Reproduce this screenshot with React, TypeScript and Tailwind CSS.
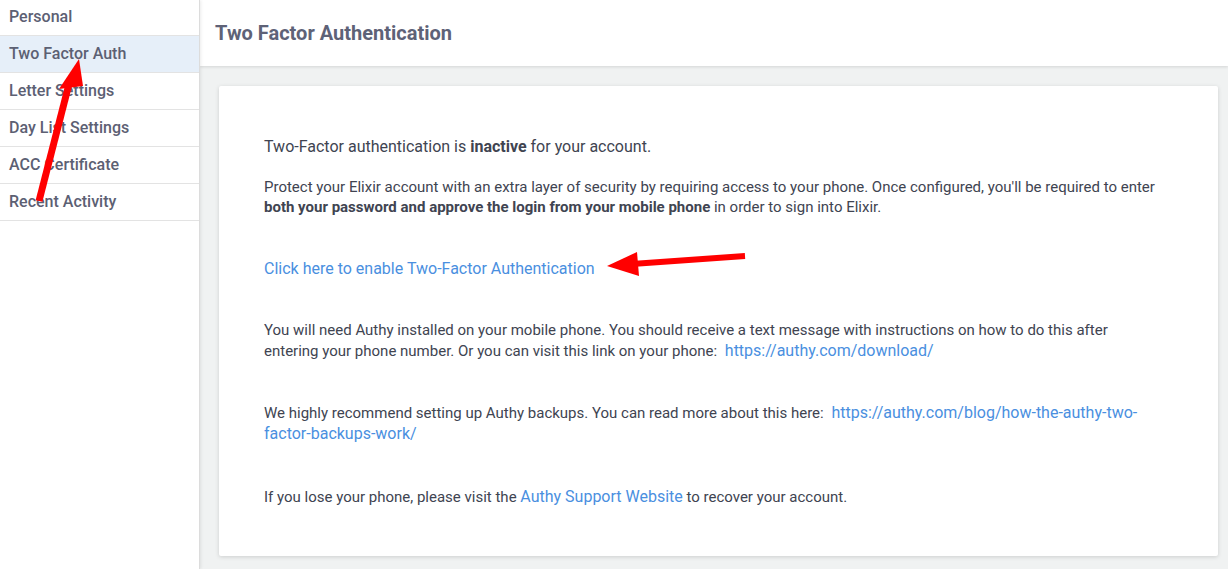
const NAV = ['Personal', 'Two Factor Auth', 'Letter Settings', 'Day List Settings', 'ACC Certificate', 'Recent Activity'];

export default function App() {
  return (
    <div className="relative flex h-[569px] w-[1228px] overflow-hidden bg-white font-['Roboto',sans-serif]">
      {/* Sidebar */}
      <aside className="z-10 w-[200px] shrink-0 border-r border-[#dcdcdc] bg-white shadow-[1px_0_3px_rgba(0,0,0,0.08)]">
        {NAV.map((item, i) => (
          <div
            key={item}
            className={`flex items-center border-b border-[#e3e3e3] pl-[9px] text-[16px] font-medium text-[#5c6073] ${
              i === 0 ? 'h-[36px] pb-[1px]' : 'h-[37px]'
            } ${i === 1 ? 'bg-[#e6eff9]' : ''}`}
          >
            {item}
          </div>
        ))}
      </aside>

      {/* Main */}
      <main className="flex flex-1 flex-col bg-[#f0f2f2]">
        <header className="flex h-[66px] items-center bg-white pl-[15px] shadow-[0_1px_3px_rgba(0,0,0,0.12)]">
          <h1 className="text-[20px] font-bold text-[#5e6277]">Two Factor Authentication</h1>
        </header>

        <div className="mt-[20px] mr-[10px] ml-[19px] h-[470px] rounded-[2px] bg-white pr-[55px] pl-[45px] pt-[49px] text-[#404451] shadow-[0_1px_4px_rgba(0,0,0,0.15)]">
          <p className="text-[16px] leading-[24px]">
            Two-Factor authentication is <b>inactive</b> for your account.
          </p>
          <p className="mt-[18px] text-[15px] leading-[20px]">
            Protect your Elixir account with an extra layer of security by requiring access to your phone. Once configured, you'll be required to enter{' '}
            <b>both your password and approve the login from your mobile phone</b> in order to sign into Elixir.
          </p>
          <p className="mt-[41px] text-[16px] leading-[22px] text-[#4a8fdf]">Click here to enable Two-Factor Authentication</p>
          <p className="mt-[40px] text-[15px] leading-[21px]">
            You will need Authy installed on your mobile phone. You should receive a text message with instructions on how to do this after entering your phone number. Or you can visit this link on your phone:{' '}
            <span className="ml-[4px] text-[16px] leading-none text-[#4a8fdf]">https://authy.com/download/</span>
          </p>
          <p className="mt-[41px] text-[15px] leading-[21px]">
            We highly recommend setting up Authy backups. You can read more about this here:{' '}
            <span className="ml-[4px] text-[16px] leading-none text-[#4a8fdf]">https://authy.com/blog/how-the-authy-two-factor-backups-work/</span>
          </p>
          <p className="mt-[42px] text-[15px] leading-[21px]">
            If you lose your phone, please visit the <span className="text-[16px] leading-none text-[#4a8fdf]">Authy Support Website</span> to recover your account.
          </p>
        </div>
      </main>

      {/* Annotation arrows */}
      <svg className="pointer-events-none absolute inset-0 z-20" width="1228" height="569">
        <line x1="39" y1="201" x2="69" y2="84" stroke="#ff0000" strokeWidth="7" />
        <polygon points="79,59 59,89 83,86" fill="#ff0000" />
        <line x1="745" y1="256" x2="632" y2="264" stroke="#ff0000" strokeWidth="6" />
        <polygon points="607,266 637,252 639,276" fill="#ff0000" />
      </svg>
    </div>
  );
}
